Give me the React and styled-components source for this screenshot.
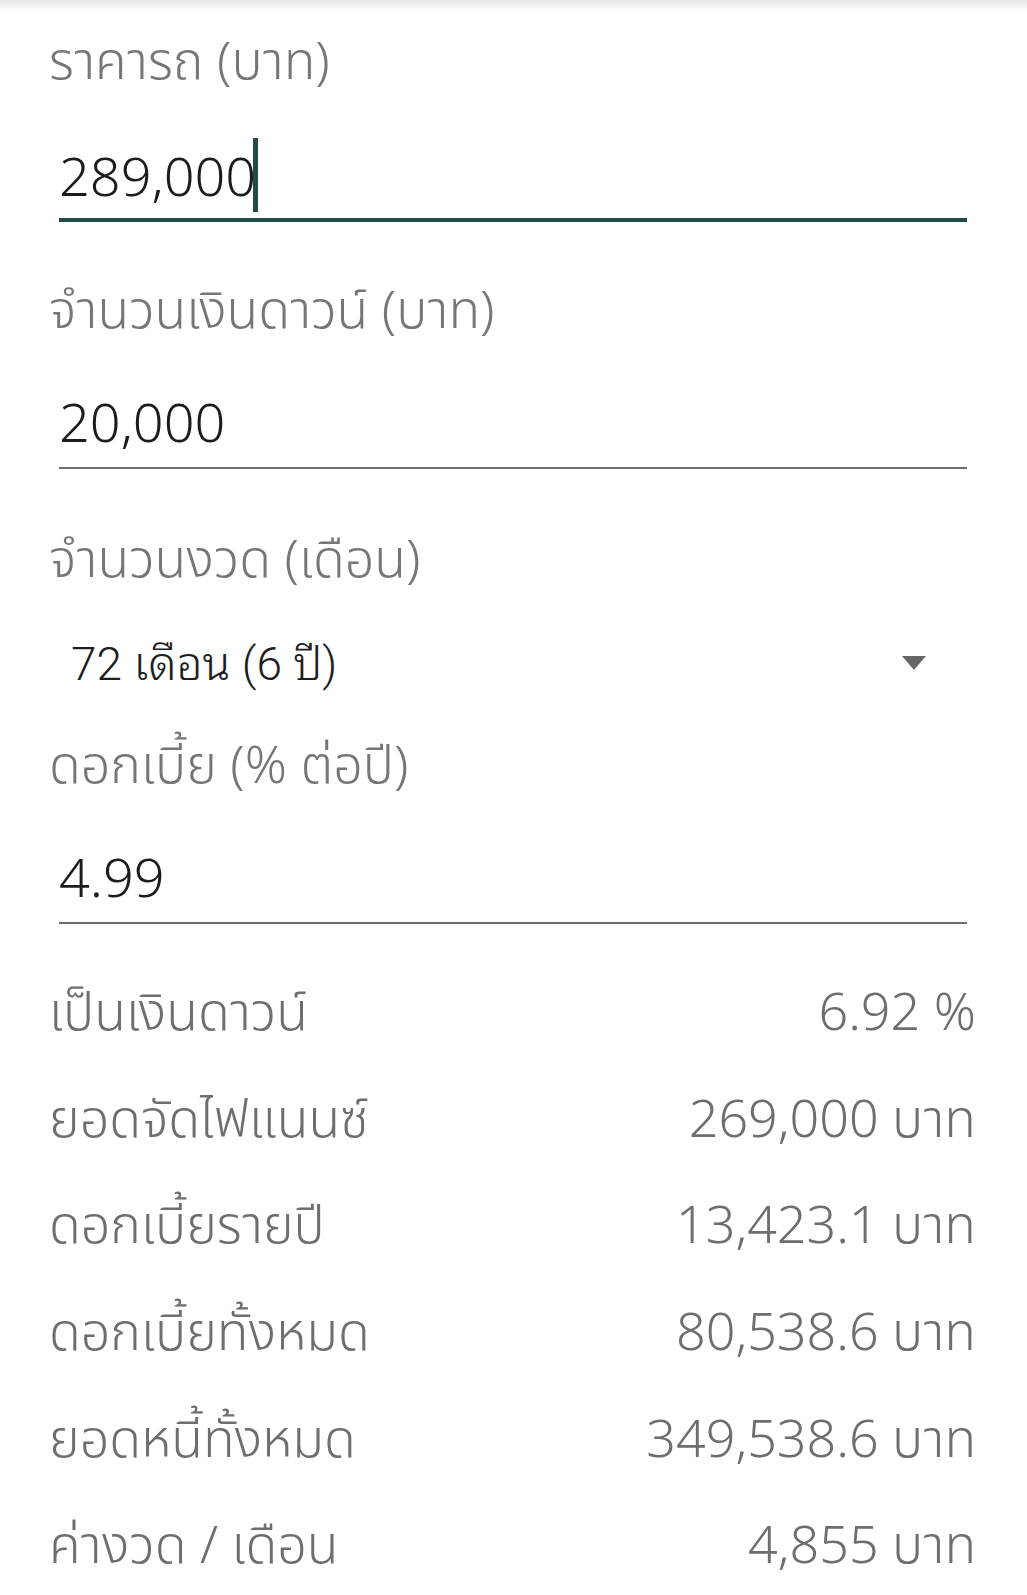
import React from 'react';
import styled, { createGlobalStyle } from 'styled-components';

const GlobalStyle = createGlobalStyle`
  body {
    margin: 0;
    background: #fff;
  }
`;

const appFont = `"Noto Sans Thai", "Noto Sans", sans-serif`;

const Page = styled.div`
  width: 1027px;
  min-height: 1595px;
  box-sizing: border-box;
  padding: 0 51px 0 49px;
  font-family: ${appFont};
  font-weight: 300;
  overflow: hidden;
`;

const TopShade = styled.div`
  height: 14px;
  margin: 0 -51px 17px -49px;
  background: linear-gradient(#e6e6e6, #fbfbfb 70%, #fff);
`;

const Label = styled.div`
  font-size: 52px;
  line-height: 64px;
  color: #767676;
  white-space: nowrap;
`;

const Field = styled.div`
  display: flex;
  flex-direction: column;
  margin-bottom: ${p => p.gap || 0}px;
`;

const InputBox = styled.div`
  height: ${p => 123 - p.pb}px;
  margin: 0 9px 0 10px;
  display: flex;
  align-items: flex-end;
  padding-bottom: ${p => p.pb}px;
  border-bottom: ${p => (p.focused ? '4px solid #224a47' : '2px solid #6e6e6e')};
`;

const Value = styled.span`
  font-size: 54px;
  line-height: 60px;
  color: #1c1c1c;
  display: flex;
  align-items: center;
`;

const Caret = styled.span`
  display: inline-block;
  width: 5px;
  height: 74px;
  margin: -12px 0 -2px -3px;
  background: #224a47;
`;

const SelectRow = styled.div`
  height: 142px;
  padding: 0 50px 10px 22px;
  box-sizing: border-box;
  display: flex;
  align-items: center;
  justify-content: space-between;
`;

const SelectText = styled.span`
  font-family: Roboto, "Noto Sans Thai Looped", sans-serif;
  font-weight: 300;
  font-size: 46px;
  color: #1e1e1e;
`;

const Arrow = styled.span`
  width: 0;
  height: 0;
  margin-top: 8px;
  border-left: 12px solid transparent;
  border-right: 12px solid transparent;
  border-top: 14px solid #666;
`;

const Results = styled.div`
  margin-top: 37px;
  display: flex;
  flex-direction: column;
`;

const Row = styled.div`
  height: 106.6px;
  display: flex;
  align-items: center;
  justify-content: space-between;
  font-size: 52px;
  color: #6e6e6e;
  white-space: nowrap;
`;

const rows = [
  ['เป็นเงินดาวน์', '6.92 %'],
  ['ยอดจัดไฟแนนซ์', '269,000 บาท'],
  ['ดอกเบี้ยรายปี', '13,423.1 บาท'],
  ['ดอกเบี้ยทั้งหมด', '80,538.6 บาท'],
  ['ยอดหนี้ทั้งหมด', '349,538.6 บาท'],
  ['ค่างวด / เดือน', '4,855 บาท'],
];

export default function App() {
  return (
    <Page>
      <GlobalStyle />
      <TopShade />
      <Field gap={58}>
        <Label>ราคารถ (บาท)</Label>
        <InputBox focused pb={8}>
          <Value>289,000<Caret /></Value>
        </InputBox>
      </Field>
      <Field gap={60}>
        <Label>จำนวนเงินดาวน์ (บาท)</Label>
        <InputBox pb={11}>
          <Value>20,000</Value>
        </InputBox>
      </Field>
      <Field>
        <Label>จำนวนงวด (เดือน)</Label>
        <SelectRow>
          <SelectText>72 เดือน (6 ปี)</SelectText>
          <Arrow />
        </SelectRow>
      </Field>
      <Field>
        <Label>ดอกเบี้ย (% ต่อปี)</Label>
        <InputBox pb={11}>
          <Value>4.99</Value>
        </InputBox>
      </Field>
      <Results>
        {rows.map(([k, v]) => (
          <Row key={k}>
            <span>{k}</span>
            <span>{v}</span>
          </Row>
        ))}
      </Results>
    </Page>
  );
}
